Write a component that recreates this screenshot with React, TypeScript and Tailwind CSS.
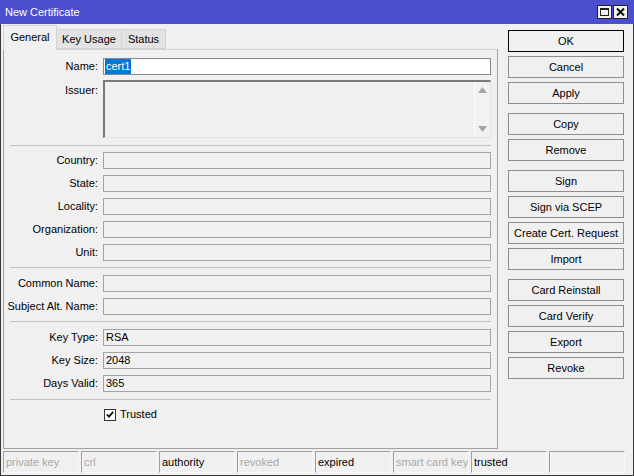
import React from 'react';

const Field = ({ label, value }: { label: string; value?: string }) => (
    <div className="flex items-center h-[17px]">
        <div className="w-[95px] pr-[1px] text-right">{label}</div>
        <div className="ml-[4px] mr-[6px] flex-1 h-[17px] border border-[#a3a3a3] bg-[#f0f0f0] pl-[2px] flex items-center">
            {value}
        </div>
    </div>
);

const Sep = ({ className = '' }: { className?: string }) => (
    <div className={`ml-[6px] mr-[6px] h-px bg-[#c3c3c3] ${className}`} />
);

const Btn = ({ label, primary, className = '' }: { label: string; primary?: boolean; className?: string }) => (
    <div
        className={`h-[22px] w-[116px] flex items-center justify-center bg-[#f0f0f0] border ${primary ? 'border-black' : 'border-[#8d8d8d]'} ${className}`}
    >
        {label}
    </div>
);

const statusCells = [
    { t: 'private key', on: false },
    { t: 'crl', on: false },
    { t: 'authority', on: true },
    { t: 'revoked', on: false },
    { t: 'expired', on: true },
    { t: 'smart card key', on: false },
    { t: 'trusted', on: true },
    { t: '', on: false },
];

export default function App() {
    return (
        <div className="w-[634px] h-[476px] bg-[#f0f0f0] font-['Liberation_Sans',Arial,sans-serif] text-[11px] text-black leading-[13px] flex flex-col overflow-hidden">
            {/* title bar */}
            <div className="h-[24px] bg-[#4b4fcd] flex items-center pl-[5px] pr-[6px] shrink-0">
                <span className="text-white text-[11px]">New Certificate</span>
                <div className="ml-auto flex gap-[1px] mt-[-1px]">
                    <div className="w-[15px] h-[14px] bg-[#f0f0f0] border border-[#222] flex items-center justify-center">
                        <div className="w-[9px] h-[8px] border border-[#222] border-t-2" />
                    </div>
                    <div className="w-[15px] h-[14px] bg-[#f0f0f0] border border-[#222] flex items-center justify-center">
                        <svg width="9" height="8" viewBox="0 0 9 8">
                            <path d="M1 0.5 L8 7.5 M8 0.5 L1 7.5" stroke="#111" strokeWidth="2" />
                        </svg>
                    </div>
                </div>
            </div>

            {/* body */}
            <div className="flex-1 flex flex-col border-x border-b border-[#3a3a3a]">
                <div className="flex pl-[2px] pt-[1px]">
                    {/* tabs + panel */}
                    <div className="w-[495px] flex flex-col">
                        <div className="h-[24px] flex items-end">
                            <div className="relative z-10 w-[54px] h-[25px] mb-[-1px] bg-[#f0f0f0] border border-b-0 border-[#d4d4d4] flex items-center justify-center pb-[1px]">
                                General
                            </div>
                            <div className="w-[65px] h-[20px] bg-[#e3e3e3] border border-[#d4d4d4] border-l-0 flex items-center justify-center">
                                Key Usage
                            </div>
                            <div className="w-[44px] h-[20px] bg-[#e3e3e3] border border-[#d4d4d4] border-l-0 flex items-center justify-center">
                                Status
                            </div>
                        </div>
                        <div className="h-[400px] border border-[#a3a3a3] border-t-[#d4d4d4] flex flex-col pt-[8px]">
                            <div className="flex items-center h-[17px]">
                                <div className="w-[95px] pr-[1px] text-right">Name:</div>
                                <div className="ml-[4px] mr-[6px] flex-1 h-[17px] border border-[#8a8a8a] bg-white pl-[1px] flex items-center">
                                    <span className="bg-[#0078d7] text-white h-[15px] flex items-center px-[1px]">cert1</span>
                                </div>
                            </div>
                            <div className="flex mt-[5px] h-[58px]">
                                <div className="w-[95px] pr-[1px] text-right pt-[4px]">Issuer:</div>
                                <div className="ml-[4px] mr-[6px] flex-1 flex border-t-2 border-l-2 border-[#7a7a7a] border-b border-r border-b-[#e3e3e3] border-r-[#e3e3e3] bg-[#f0f0f0]">
                                    <div className="flex-1" />
                                    <div className="w-[16px] border-l border-[#fafafa] bg-[#f2f2f2] flex flex-col items-center justify-between py-[5px]">
                                        <svg width="9" height="6" viewBox="0 0 9 6">
                                            <path d="M4.5 0 L9 6 L0 6 Z" fill="#a6a6a6" />
                                        </svg>
                                        <svg width="9" height="6" viewBox="0 0 9 6">
                                            <path d="M0 0 L9 0 L4.5 6 Z" fill="#a6a6a6" />
                                        </svg>
                                    </div>
                                </div>
                            </div>
                            <Sep className="mt-[7px]" />
                            <div className="flex flex-col gap-[6px] mt-[6px]">
                                <Field label="Country:" />
                                <Field label="State:" />
                                <Field label="Locality:" />
                                <Field label="Organization:" />
                                <Field label="Unit:" />
                            </div>
                            <Sep className="mt-[6px]" />
                            <div className="flex flex-col gap-[6px] mt-[7px]">
                                <Field label="Common Name:" />
                                <Field label="Subject Alt. Name:" />
                            </div>
                            <Sep className="mt-[6px]" />
                            <div className="flex flex-col gap-[6px] mt-[7px]">
                                <Field label="Key Type:" value="RSA" />
                                <Field label="Key Size:" value="2048" />
                                <Field label="Days Valid:" value="365" />
                            </div>
                            <Sep className="mt-[7px]" />
                            <div className="flex items-center mt-[8px] ml-[100px] gap-[4px]">
                                <div className="w-[12px] h-[12px] border border-[#333] bg-white flex items-center justify-center">
                                    <svg width="8" height="7" viewBox="0 0 8 7">
                                        <path d="M0.8 3.4 L3 5.6 L7.2 0.8" stroke="#111" strokeWidth="1.8" fill="none" />
                                    </svg>
                                </div>
                                <span>Trusted</span>
                            </div>
                        </div>
                    </div>

                    {/* buttons */}
                    <div className="ml-[10px] pt-[5px] flex flex-col">
                        <div className="flex flex-col gap-[4px]">
                            <Btn label="OK" primary />
                            <Btn label="Cancel" />
                            <Btn label="Apply" />
                        </div>
                        <div className="flex flex-col gap-[4px] mt-[9px]">
                            <Btn label="Copy" />
                            <Btn label="Remove" />
                        </div>
                        <div className="flex flex-col gap-[4px] mt-[9px]">
                            <Btn label="Sign" />
                            <Btn label="Sign via SCEP" />
                            <Btn label="Create Cert. Request" />
                            <Btn label="Import" />
                        </div>
                        <div className="flex flex-col gap-[4px] mt-[9px]">
                            <Btn label="Card Reinstall" />
                            <Btn label="Card Verify" />
                            <Btn label="Export" />
                            <Btn label="Revoke" />
                        </div>
                    </div>
                </div>

                {/* status bar */}
                <div className="flex gap-[2px] pl-[2px] mt-[2px]">
                    {statusCells.map((c, i) => (
                        <div
                            key={i}
                            className={`w-[76px] h-[22px] shrink-0 overflow-hidden whitespace-nowrap border-t border-l border-[#a0a0a0] border-b border-r border-b-[#f8f8f8] border-r-[#f8f8f8] flex items-center pl-[2px] ${c.on ? 'text-black' : 'text-[#a8a8a8]'}`}
                        >
                            {c.t}
                        </div>
                    ))}
                </div>
            </div>
        </div>
    );
}
